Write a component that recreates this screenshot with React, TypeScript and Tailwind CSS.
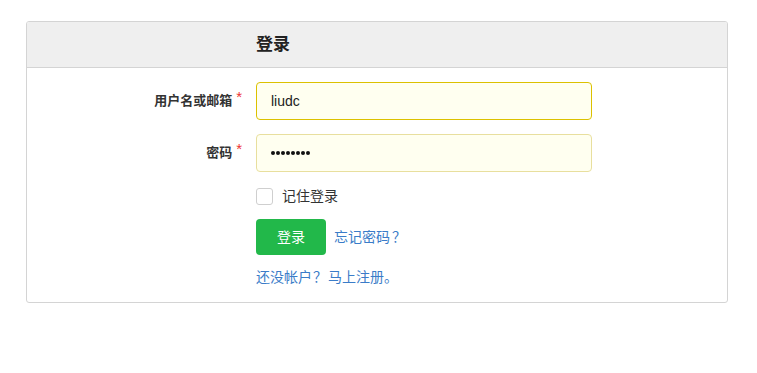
import React from "react";

export default function App() {
  const dots = Array.from({ length: 8 });
  return (
    <div className="w-[757px] h-[373px] bg-white" style={{ fontFamily: '"Liberation Sans", "Noto Sans CJK SC", sans-serif' }}>
      <div className="pt-[21px] pl-[26px]">
        <div className="w-[702px] h-[282px] border border-[#d4d4d4] rounded-[3px] overflow-hidden">
          <div className="h-[46px] bg-[#efefef] border-b border-[#d4d4d4] flex items-center pl-[229px]">
            <span className="text-[17px] font-bold text-[#222]">登录</span>
          </div>
          <div className="pt-[14px]">
            <div className="flex items-center h-[38px]">
              <div className="w-[229px] pr-[14px] text-right text-[13px] font-bold text-[#333] relative top-[-1px]">
                用户名或邮箱<span className="text-[#e33] text-[15px] font-normal ml-[4px] relative top-[-3px]">*</span>
              </div>
              <div className="w-[336px] h-[38px] rounded-[4px] border border-[#dcc100] bg-[#fffff0] flex items-center pl-[14px] text-[14px] text-[#222]">
                liudc
              </div>
            </div>
            <div className="flex items-center h-[38px] mt-[14px]">
              <div className="w-[229px] pr-[14px] text-right text-[13px] font-bold text-[#333] relative top-[-1px]">
                密码<span className="text-[#e33] text-[15px] font-normal ml-[4px] relative top-[-3px]">*</span>
              </div>
              <div className="w-[336px] h-[38px] rounded-[4px] border border-[#e8df9e] bg-[#fffff0] flex items-center pl-[14px]">
                <div className="flex gap-[1.5px] items-center">
                  {dots.map((_, i) => (
                    <span key={i} className="block w-[3.5px] h-[3.5px] rounded-full bg-[#111]" />
                  ))}
                </div>
              </div>
            </div>
            <div className="flex items-center mt-[15px] pl-[229px] h-[19px]">
              <div className="w-[17px] h-[17px] rounded-[3px] border border-[#cfcfcf] bg-white" />
              <span className="ml-[9px] text-[14px] text-[#333]">记住登录</span>
            </div>
            <div className="flex items-center mt-[13px] pl-[229px]">
              <div className="w-[70px] h-[36px] rounded-[4px] bg-[#22b84a] text-white text-[14px] flex items-center justify-center">登录</div>
              <span className="ml-[8px] text-[14px] text-[#3a7cc8]">忘记密码<span className="ml-[2px]">？</span></span>
            </div>
            <div className="pl-[229px] mt-[12px] text-[14px] text-[#3a7cc8]">还没帐户<span className="mx-[1px]">？</span>马上注册。</div>
          </div>
        </div>
      </div>
    </div>
  );
}
